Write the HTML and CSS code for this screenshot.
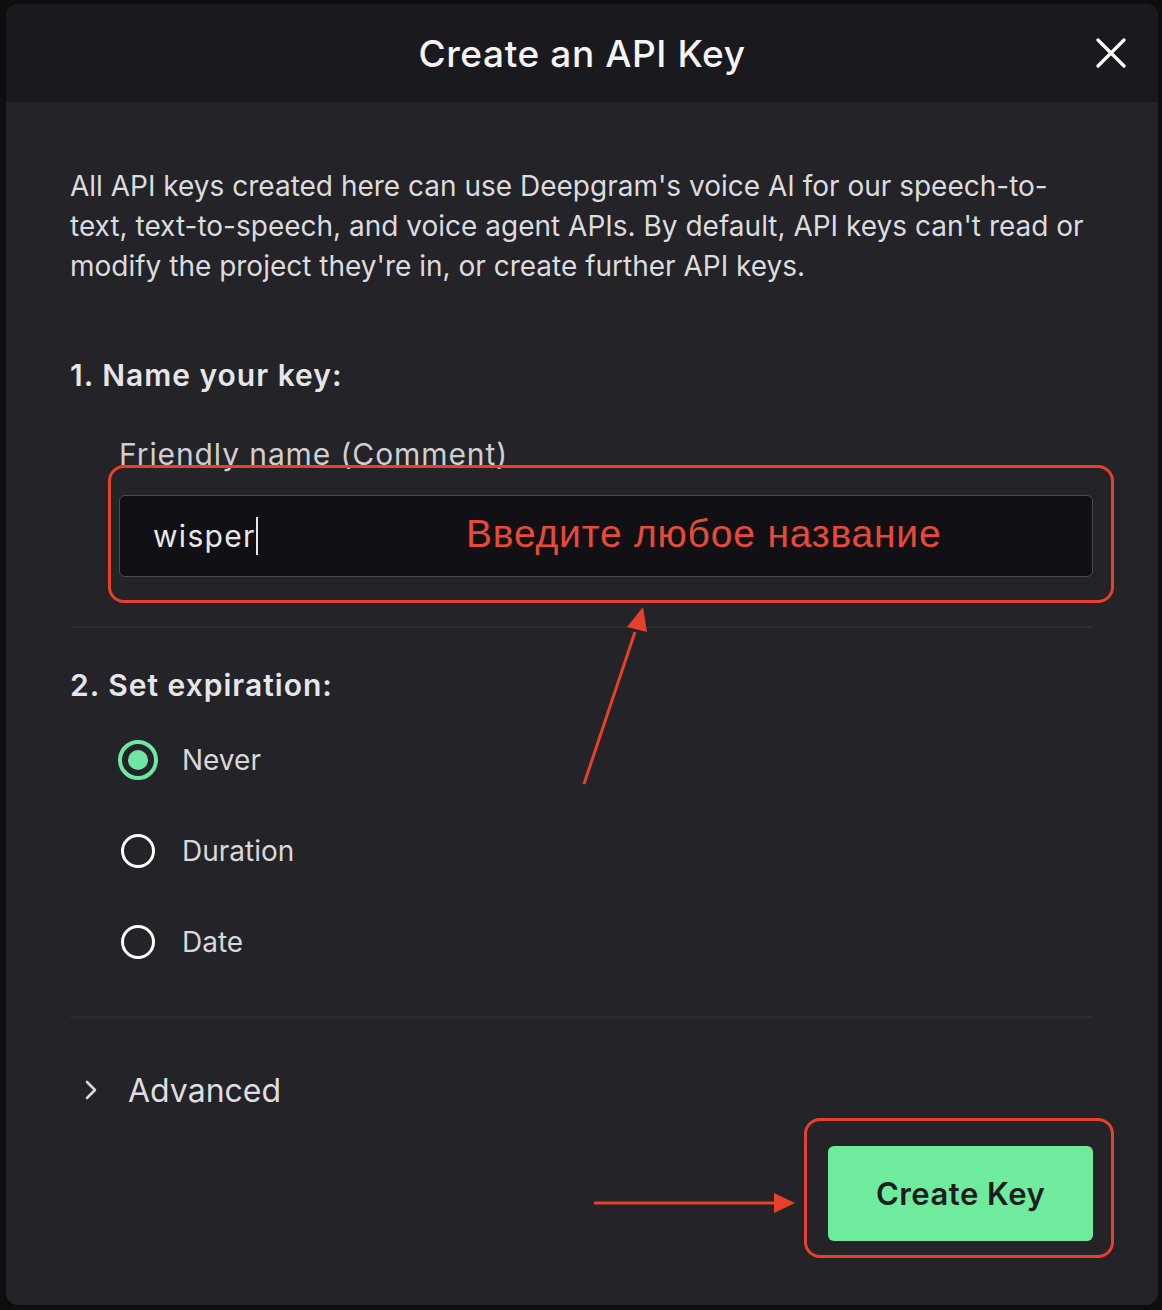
FILE: index.html
```html
<!DOCTYPE html>
<html lang="en">
<head>
<meta charset="utf-8">
<title>Create an API Key</title>
<link rel="stylesheet" href="styles.css">
</head>
<body>
<div class="backdrop">
  <div class="modal">
    <header class="modal-header">
      <h1 class="modal-title">Create an API Key</h1>
      <button class="close-btn" aria-label="Close">
        <svg width="30" height="30" viewBox="0 0 30 30"><path d="M2 2 L28 28 M28 2 L2 28" stroke="#fff" stroke-width="3.2" stroke-linecap="round"/></svg>
      </button>
    </header>
    <div class="modal-body">
      <p class="intro">All API keys created here can use Deepgram's voice AI for our speech-to-text, text-to-speech, and voice agent APIs. By default, API keys can't read or modify the project they're in, or create further API keys.</p>

      <h2 class="section-title">1. Name your key:</h2>
      <div class="field">
        <label class="field-label">Friendly name (Comment)</label>
        <div class="input"><span class="input-text">wisper</span><span class="caret"></span></div>
      </div>

      <div class="divider divider-1"></div>

      <h2 class="section-title">2. Set expiration:</h2>
      <div class="radios">
        <div class="radio-row"><span class="radio checked"><span class="dot"></span></span><span class="radio-label">Never</span></div>
        <div class="radio-row"><span class="radio"></span><span class="radio-label">Duration</span></div>
        <div class="radio-row"><span class="radio"></span><span class="radio-label">Date</span></div>
      </div>

      <div class="divider divider-2"></div>

      <div class="advanced">
        <svg class="chevron" width="14" height="22" viewBox="0 0 14 22"><path d="M3 3 L11 11 L3 19" fill="none" stroke="#d8d8d8" stroke-width="2.6" stroke-linecap="round" stroke-linejoin="round"/></svg>
        <span class="advanced-label">Advanced</span>
      </div>

      <div class="actions">
        <button class="create-btn">Create Key</button>
      </div>
    </div>

    <div class="note-box note-input"></div>
    <div class="note-text">Введите любое название</div>
    <div class="note-box note-button"></div>
    <svg class="note-arrows" width="1162" height="1310" viewBox="0 0 1162 1310">
      <line x1="584" y1="784" x2="635" y2="632" stroke="#e8412b" stroke-width="3"/>
      <polygon points="643,607 647,632 627,627" fill="#e8412b"/>
      <line x1="594" y1="1203" x2="776" y2="1203" stroke="#e8412b" stroke-width="3"/>
      <polygon points="795,1203 774,1193 774,1213" fill="#e8412b"/>
    </svg>
  </div>
</div>
</body>
</html>
```

FILE: styles.css
```css
* { box-sizing: border-box; }
html, body {
  margin: 0;
  padding: 0;
  background: #0e0e10;
  width: 1162px;
  height: 1310px;
  overflow: hidden;
  font-family: "Inter", "Noto Sans", "Liberation Sans", sans-serif;
}
.backdrop {
  padding: 4px 4px 0 6px;
}
.modal {
  position: relative;
  width: 1152px;
  height: 1301px;
  background: #232328;
  border-radius: 12px;
  overflow: hidden;
}
.modal-header {
  height: 98px;
  background: #1a1a1e;
  display: flex;
  align-items: center;
  justify-content: center;
  position: relative;
}
.modal-title {
  margin: 0;
  font-size: 37px;
  font-weight: 500;
  color: #f4f4f5;
  letter-spacing: 0.6px;
}
.close-btn {
  position: absolute;
  right: 32px;
  top: 34px;
  width: 30px;
  height: 30px;
  padding: 0;
  border: 0;
  background: none;
  display: flex;
}
.modal-body {
  padding: 64px 65px 0 64px;
}
.intro {
  margin: 0;
  font-size: 28px;
  line-height: 40px;
  letter-spacing: 0;
  color: #dcdcdf;
}
.section-title {
  margin: 0;
  font-size: 30px;
  line-height: 40px;
  font-weight: 600;
  letter-spacing: 1px;
  color: #e6e6e8;
}
.intro + .section-title { margin-top: 69px; }
.field {
  padding-left: 49px;
  margin-top: 41px;
}
.field-label {
  display: block;
  font-size: 30px;
  line-height: 36px;
  letter-spacing: 0.9px;
  color: #cfcfd2;
}
.input {
  margin-top: 23px;
  height: 82px;
  border: 1px solid #4b4b52;
  border-radius: 6px;
  background: #111115;
  display: flex;
  align-items: center;
  padding-left: 33px;
}
.input-text {
  font-size: 30px;
  letter-spacing: 1.3px;
  color: #e8e8ea;
}
.caret {
  width: 2px;
  height: 38px;
  background: #e8e8ea;
  margin-left: 0;
}
.divider {
  height: 2px;
  background: #2c2c31;
}
.divider-1 { margin: 49px 0 37px; }
.divider-2 { margin: 54px 0 52px; }
.radios {
  margin-top: 35px;
  padding-left: 48px;
  display: flex;
  flex-direction: column;
  gap: 51px;
}
.radio-row {
  display: flex;
  align-items: center;
  height: 40px;
}
.radio {
  width: 34px;
  height: 34px;
  border: 3px solid #ffffff;
  border-radius: 50%;
  display: flex;
  align-items: center;
  justify-content: center;
  margin-left: 3px;
}
.radio.checked {
  width: 40px;
  height: 40px;
  margin-left: 0;
  border: 4px solid #6ee6a4;
  margin-right: -3px;
}
.radio .dot {
  width: 20px;
  height: 20px;
  border-radius: 50%;
  background: #6ee6a4;
}
.radio-label {
  margin-left: 27px;
  font-size: 28px;
  color: #d8d8db;
}
.advanced {
  display: flex;
  align-items: center;
  height: 40px;
  padding-left: 14px;
}
.chevron { margin-right: 30px; }
.advanced-label {
  font-size: 32px;
  color: #dedee0;
}
.actions {
  display: flex;
  justify-content: flex-end;
  margin-top: 36px;
}
.create-btn {
  width: 265px;
  height: 95px;
  border: 0;
  border-radius: 6px;
  background: #6eeb9d;
  color: #1c1c22;
  font-family: inherit;
  font-size: 31px;
  font-weight: 600;
  letter-spacing: 0.5px;
}
.note-box {
  position: absolute;
  border: 3px solid #e8412b;
  border-radius: 16px;
}
.note-input {
  left: 102px;
  top: 461px;
  width: 1006px;
  height: 138px;
}
.note-button {
  left: 798px;
  top: 1114px;
  width: 310px;
  height: 140px;
}
.note-text {
  position: absolute;
  left: 460px;
  top: 508px;
  font-family: "Liberation Sans", Arial, sans-serif;
  font-size: 39px;
  line-height: 44px;
  letter-spacing: 0.8px;
  color: #e84a3a;
}
.note-arrows {
  position: absolute;
  left: -6px;
  top: -4px;
}
```
